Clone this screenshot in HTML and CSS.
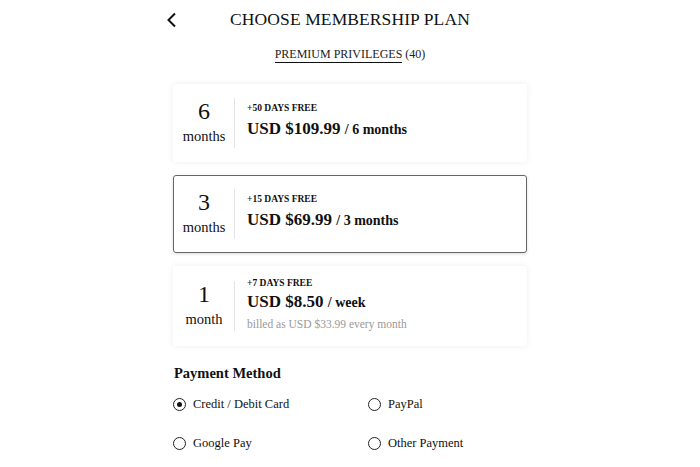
FILE: index.html
```html
<!DOCTYPE html>
<html lang="en">
<head>
  <meta charset="UTF-8">
  <title>Choose Membership Plan</title>
  <link rel="stylesheet" href="styles.css">
</head>
<body>
  <div class="page">
    <div class="header">
      <button class="back" aria-label="Back">
        <svg width="12" height="16" viewBox="0 0 12 16"><path d="M9 1.5 L2.5 8 L9 14.5" fill="none" stroke="#111" stroke-width="2"/></svg>
      </button>
      <h1>CHOOSE MEMBERSHIP PLAN</h1>
    </div>

    <div class="privileges"><span class="link">PREMIUM PRIVILEGES</span> (40)</div>

    <div class="plans">
      <div class="plan">
        <div class="term"><span class="num">6</span><span class="unit">months</span></div>
        <div class="info">
          <div class="bonus">+50 DAYS FREE</div>
          <div class="price">USD $109.99 <span class="per">/ 6 months</span></div>
        </div>
      </div>
      <div class="plan selected">
        <div class="term"><span class="num">3</span><span class="unit">months</span></div>
        <div class="info">
          <div class="bonus">+15 DAYS FREE</div>
          <div class="price">USD $69.99 <span class="per">/ 3 months</span></div>
        </div>
      </div>
      <div class="plan with-note">
        <div class="term"><span class="num">1</span><span class="unit">month</span></div>
        <div class="info">
          <div class="bonus">+7 DAYS FREE</div>
          <div class="price">USD $8.50 <span class="per">/ week</span></div>
          <div class="billed">billed as USD $33.99 every month</div>
        </div>
      </div>
    </div>

    <h2>Payment Method</h2>
    <div class="methods">
      <label class="method"><span class="radio checked"></span>Credit / Debit Card</label>
      <label class="method"><span class="radio"></span>PayPal</label>
      <label class="method"><span class="radio"></span>Google Pay</label>
      <label class="method"><span class="radio"></span>Other Payment</label>
    </div>
  </div>
</body>
</html>
```

FILE: styles.css
```css
body {
  margin: 0;
  background: #fff;
  color: #111;
  font-family: "Liberation Serif", "Times New Roman", serif;
}

.page {
  width: 354px;
  margin: 0 auto;
}

.header {
  position: relative;
  height: 38px;
  display: flex;
  align-items: center;
  justify-content: center;
}

.back {
  position: absolute;
  left: -7px;
  top: 12px;
  background: none;
  border: none;
  padding: 0;
  cursor: pointer;
}

h1 {
  margin: 0;
  font-size: 17.5px;
  font-weight: normal;
  letter-spacing: 0.1px;
}

.privileges {
  text-align: center;
  font-size: 12px;
  margin-top: 9px;
  color: #222;
}

.privileges .link {
  border-bottom: 1px solid #111;
  padding-bottom: 1px;
}

.plans {
  margin-top: 22px;
  display: flex;
  flex-direction: column;
  gap: 13px;
}

.plan {
  display: flex;
  align-items: center;
  min-height: 78px;
  padding: 9px 0;
  box-sizing: border-box;
  border-radius: 3px;
  border: 1px solid transparent;
  box-shadow: 0 0 6px rgba(0, 0, 0, 0.08);
}

.plan.selected {
  border-color: #666;
  box-shadow: 0 1px 3px rgba(0, 0, 0, 0.15);
}

.term {
  width: 60px;
  display: flex;
  flex-direction: column;
  align-items: center;
  border-right: 1px solid #e4e4e4;
  padding: 0 0 1px;
}

.term .num {
  font-size: 24px;
  line-height: 26px;
}

.term .unit {
  font-size: 14.5px;
  line-height: 22px;
  margin-top: 1px;
}

.info {
  padding: 0 0 4px 12px;
}

.with-note .info {
  padding-bottom: 2px;
}

.bonus {
  font-size: 9.5px;
  font-weight: bold;
  line-height: 14px;
  margin-bottom: 3px;
}

.with-note .bonus {
  margin-bottom: 1px;
}

.price {
  font-size: 17px;
  font-weight: bold;
  line-height: 22px;
}

.price .per {
  font-size: 14px;
}

.billed {
  font-size: 11.5px;
  color: #999;
  line-height: 20px;
}

h2 {
  margin: 19px 0 0 1px;
  font-size: 14.5px;
  font-weight: bold;
}

.methods {
  display: grid;
  grid-template-columns: 195px 1fr;
  row-gap: 24px;
  margin-top: 15px;
}

.method {
  display: flex;
  align-items: center;
  gap: 7px;
  font-size: 12.5px;
  cursor: pointer;
}

.radio {
  width: 11px;
  height: 11px;
  border: 1px solid #222;
  border-radius: 50%;
  display: flex;
  align-items: center;
  justify-content: center;
}

.radio.checked::after {
  content: "";
  width: 5px;
  height: 5px;
  border-radius: 50%;
  background: #111;
}
```
